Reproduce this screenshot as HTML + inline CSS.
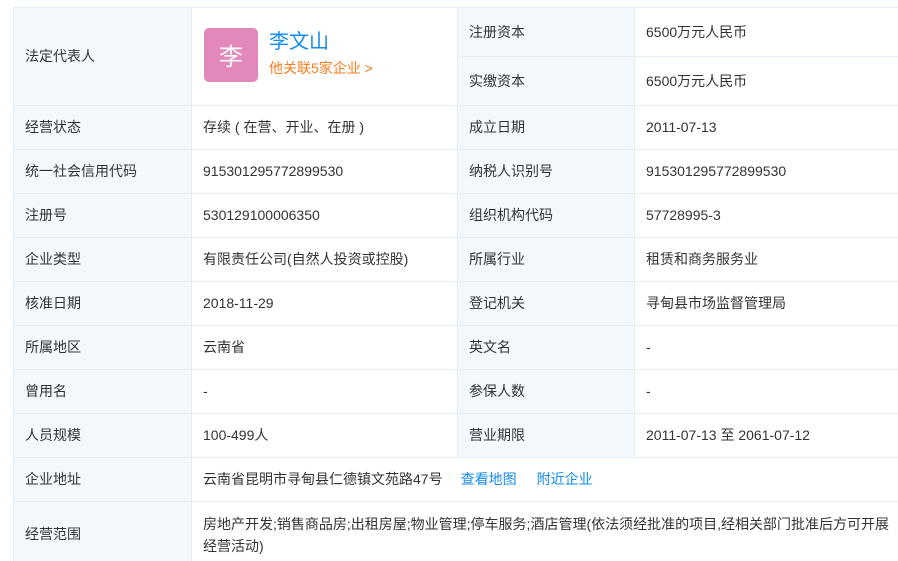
<!DOCTYPE html>
<html><head><meta charset="utf-8"><style>
html,body{margin:0;padding:0;background:#fff;width:898px;height:561px;overflow:hidden}
body{font-family:"Liberation Sans","Noto Sans CJK SC",sans-serif;font-size:14px;color:#333;position:relative}
.c{position:absolute;box-sizing:border-box;border-top:1px solid #e4eef6;border-left:1px solid #e4eef6;display:flex;align-items:center;padding-left:11px;padding-bottom:1px}
.l{background:#f2f8fc}
a{color:#128bed;text-decoration:none}
</style></head><body>
<div class="c l" style="left:13px;top:7px;width:178px;height:98px">法定代表人</div>
<div class="c" style="left:191px;top:7px;width:266px;height:98px;padding-left:12px;padding-bottom:4px">
 <div style="width:54px;height:54px;background:#e288bb;border-radius:5px;color:#fff;font-size:24px;display:flex;align-items:center;justify-content:center">李</div>
 <div style="margin-left:11px;margin-top:-2px">
  <div style="color:#128bed;font-size:20px;line-height:24px">李文山</div>
  <div style="color:#fd7c1b;font-size:14px;line-height:20px;margin-top:4px">他关联5家企业 &gt;</div>
 </div>
</div>
<div class="c l" style="left:457px;top:7px;width:177px;height:49px">注册资本</div>
<div class="c" style="left:634px;top:7px;width:270px;height:49px">6500万元人民币</div>
<div class="c l" style="left:457px;top:56px;width:177px;height:49px">实缴资本</div>
<div class="c" style="left:634px;top:56px;width:270px;height:49px">6500万元人民币</div>

<div class="c l" style="left:13px;top:105px;width:178px;height:44px">经营状态</div>
<div class="c" style="left:191px;top:105px;width:266px;height:44px">存续 ( 在营、开业、在册 )</div>
<div class="c l" style="left:457px;top:105px;width:177px;height:44px">成立日期</div>
<div class="c" style="left:634px;top:105px;width:270px;height:44px">2011-07-13</div>

<div class="c l" style="left:13px;top:149px;width:178px;height:44px">统一社会信用代码</div>
<div class="c" style="left:191px;top:149px;width:266px;height:44px">915301295772899530</div>
<div class="c l" style="left:457px;top:149px;width:177px;height:44px">纳税人识别号</div>
<div class="c" style="left:634px;top:149px;width:270px;height:44px">915301295772899530</div>

<div class="c l" style="left:13px;top:193px;width:178px;height:44px">注册号</div>
<div class="c" style="left:191px;top:193px;width:266px;height:44px">530129100006350</div>
<div class="c l" style="left:457px;top:193px;width:177px;height:44px">组织机构代码</div>
<div class="c" style="left:634px;top:193px;width:270px;height:44px">57728995-3</div>

<div class="c l" style="left:13px;top:237px;width:178px;height:44px">企业类型</div>
<div class="c" style="left:191px;top:237px;width:266px;height:44px">有限责任公司(自然人投资或控股)</div>
<div class="c l" style="left:457px;top:237px;width:177px;height:44px">所属行业</div>
<div class="c" style="left:634px;top:237px;width:270px;height:44px">租赁和商务服务业</div>

<div class="c l" style="left:13px;top:281px;width:178px;height:44px">核准日期</div>
<div class="c" style="left:191px;top:281px;width:266px;height:44px">2018-11-29</div>
<div class="c l" style="left:457px;top:281px;width:177px;height:44px">登记机关</div>
<div class="c" style="left:634px;top:281px;width:270px;height:44px">寻甸县市场监督管理局</div>

<div class="c l" style="left:13px;top:325px;width:178px;height:44px">所属地区</div>
<div class="c" style="left:191px;top:325px;width:266px;height:44px">云南省</div>
<div class="c l" style="left:457px;top:325px;width:177px;height:44px">英文名</div>
<div class="c" style="left:634px;top:325px;width:270px;height:44px">-</div>

<div class="c l" style="left:13px;top:369px;width:178px;height:44px">曾用名</div>
<div class="c" style="left:191px;top:369px;width:266px;height:44px">-</div>
<div class="c l" style="left:457px;top:369px;width:177px;height:44px">参保人数</div>
<div class="c" style="left:634px;top:369px;width:270px;height:44px">-</div>

<div class="c l" style="left:13px;top:413px;width:178px;height:44px">人员规模</div>
<div class="c" style="left:191px;top:413px;width:266px;height:44px">100-499人</div>
<div class="c l" style="left:457px;top:413px;width:177px;height:44px">营业期限</div>
<div class="c" style="left:634px;top:413px;width:270px;height:44px">2011-07-13 至 2061-07-12</div>

<div class="c l" style="left:13px;top:457px;width:178px;height:44px">企业地址</div>
<div class="c" style="left:191px;top:457px;width:713px;height:44px">云南省昆明市寻甸县仁德镇文苑路47号<a style="margin-left:18px">查看地图</a><a style="margin-left:20px">附近企业</a></div>

<div class="c l" style="left:13px;top:501px;width:178px;height:66px">经营范围</div>
<div class="c" style="left:191px;top:501px;width:713px;height:66px;align-items:flex-start;padding-top:11px;line-height:22px;padding-right:4px">房地产开发;销售商品房;出租房屋;物业管理;停车服务;酒店管理(依法须经批准的项目,经相关部门批准后方可开展经营活动)</div>
</body></html>
